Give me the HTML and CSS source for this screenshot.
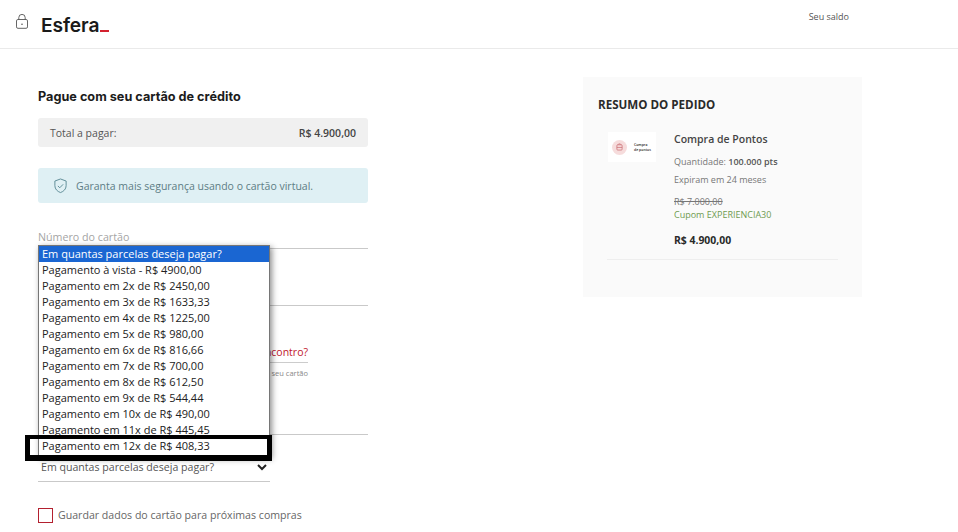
FILE: index.html
```html
<!DOCTYPE html>
<html lang="pt-BR">
<head>
<meta charset="utf-8">
<title>Esfera</title>
<link rel="stylesheet" href="styles.css">
</head>
<body>
<header class="topbar">
  <svg class="lock" viewBox="0 0 12 15" width="12" height="15" fill="none" stroke="#555" stroke-width="0.9"><rect x="0.5" y="5.5" width="11" height="8.8" rx="1.4"/><path d="M2.8 5.5V3.6a3.2 3.2 0 0 1 6.4 0v1.9"/><circle cx="6" cy="10.2" r="0.7" fill="#333" stroke="none"/></svg>
  <div class="logo">Esfera<span class="logo-dash"></span></div>
  <div class="saldo">Seu saldo</div>
</header>
<main class="page">
  <section class="form">
    <h1 class="form-title">Pague com seu cartão de crédito</h1>
    <div class="total"><span>Total a pagar:</span><strong>R$ 4.900,00</strong></div>
    <div class="notice">
      <svg viewBox="0 0 16 17" width="15" height="16" fill="none" stroke="#5b8a94" stroke-width="1"><path d="M8 1l6 2.2v5c0 3.6-2.6 6.1-6 7.3-3.4-1.2-6-3.7-6-7.3v-5z"/><path d="M5.2 8.4l2 2 3.6-3.7"/></svg>
      <span>Garanta mais segurança usando o cartão virtual.</span>
    </div>
    <div class="field field-number">Número do cartão</div>
    <div class="field field-name"></div>
    <div class="promo"><span class="promo-link">Tem cartão Encontro?</span><span class="promo-note">Use seu cartão</span></div>
    <div class="field field-cvv"></div>
    <div class="select-row"><span>Em quantas parcelas deseja pagar?</span>
      <svg viewBox="0 0 10 7" width="10" height="7" fill="none" stroke="#222" stroke-width="2"><path d="M1 1l4 4 4-4"/></svg>
    </div>
    <label class="save"><span class="box"></span>Guardar dados do cartão para próximas compras</label>

    <ul class="dropdown">
      <li class="active">Em quantas parcelas deseja pagar?</li>
      <li>Pagamento à vista - R$ 4900,00</li>
      <li>Pagamento em 2x de R$ 2450,00</li>
      <li>Pagamento em 3x de R$ 1633,33</li>
      <li>Pagamento em 4x de R$ 1225,00</li>
      <li>Pagamento em 5x de R$ 980,00</li>
      <li>Pagamento em 6x de R$ 816,66</li>
      <li>Pagamento em 7x de R$ 700,00</li>
      <li>Pagamento em 8x de R$ 612,50</li>
      <li>Pagamento em 9x de R$ 544,44</li>
      <li>Pagamento em 10x de R$ 490,00</li>
      <li>Pagamento em 11x de R$ 445,45</li>
      <li>Pagamento em 12x de R$ 408,33</li>
    </ul>
    <div class="highlight"></div>
  </section>
  <aside class="summary">
    <h2 class="summary-title">RESUMO DO PEDIDO</h2>
    <div class="item">
      <div class="thumb">
        <span class="thumb-badge"><svg viewBox="0 0 8 9" width="7" height="8" fill="none" stroke="#c9696e" stroke-width="0.8"><rect x="1" y="2" width="6" height="6" rx="1"/><path d="M2 2l1-1h2l1 1M1 5h6"/></svg></span>
        <span class="thumb-text">Compra<br>de pontos</span>
      </div>
      <div class="item-info">
        <div class="item-name">Compra de Pontos</div>
        <div class="item-qty">Quantidade: <b>100.000 pts</b></div>
        <div class="item-exp">Expiram em 24 meses</div>
        <div class="item-old">R$ 7.000,00</div>
        <div class="item-coupon">Cupom EXPERIENCIA30</div>
        <div class="item-price">R$ 4.900,00</div>
      </div>
    </div>
  </aside>
</main>
</body>
</html>
```
FILE: styles.css
```css
* { box-sizing: border-box; }
html, body { margin: 0; height: 532px; overflow: hidden; }
body { background: #fff; font-family: "Open Sans", sans-serif; color: #555; }

.topbar { height: 49px; border-bottom: 1px solid #eaeaea; display: flex; align-items: flex-start; padding: 14px 0 0 16px; position: relative; }
.lock { margin-top: 0; }
.logo { margin-left: 13px; font-family: Inter, sans-serif; font-weight: 600; font-size: 19.2px; line-height: 22px; color: #1a1a1a; display: flex; align-items: flex-end; letter-spacing: -0.1px; }
.logo-dash { width: 9px; height: 2px; background: #d3222f; margin: 0 0 4px 1px; }
.saldo { margin-left: auto; margin-right: 109px; font-size: 9px; line-height: 12px; margin-top: -3px; color: #555; }

.page { display: flex; align-items: flex-start; padding: 28px 0 0 38px; }
.form { width: 330px; position: relative; }
.form-title { margin: 12px 0 0; font-family: Inter, sans-serif; font-weight: 700; font-size: 12.7px; line-height: 16px; color: #1c1c1c; }
.total { margin-top: 13px; height: 29px; background: #f0f0f0; border-radius: 3px; display: flex; justify-content: space-between; align-items: center; padding: 0 12px; font-size: 10.5px; color: #555; }
.total strong { font-weight: 600; color: #444; }
.notice { margin-top: 21px; height: 35px; background: #dff0f4; border-radius: 3px; display: flex; align-items: center; gap: 8px; padding: 0 15px; font-size: 10.5px; color: #5d7d84; }
.field { border-bottom: 1px solid #c9c9c9; font-size: 10.7px; color: #a5a5a5; }
.field-number { margin-top: 26px; height: 20px; line-height: 16px; }
.field-name { height: 57px; }
.promo { height: 77px; width: 270px; display: flex; flex-direction: column; align-items: flex-end; padding-top: 38px; }
.promo-link { font-size: 10.5px; line-height: 16px; color: #c0162c; padding-bottom: 2px; border-bottom: 1px solid #ccc; }
.promo-note { font-size: 7.5px; line-height: 11px; margin-top: 5px; color: #888; }
.field-cvv { height: 52px; }
.select-row { width: 232px; height: 47px; border-bottom: 1px solid #c9c9c9; display: flex; justify-content: space-between; align-items: flex-end; padding: 0 3px 6px 3px; font-size: 10.6px; line-height: 15px; color: #555; }
.select-row svg { margin-bottom: 4px; }
.save { margin-top: 26px; display: flex; align-items: center; gap: 5px; font-size: 10.6px; line-height: 15px; color: #666; }
.box { width: 15px; height: 15px; border: 1px solid #b3202f; }

.dropdown { position: absolute; left: 0; top: 168px; width: 232px; height: 212px; margin: 0; padding: 0; list-style: none; background: #fff; border: 1px solid #767676; box-shadow: 2px 2px 6px rgba(0,0,0,.45); font-size: 11px; line-height: 16px; color: #222; }
.dropdown li { height: 16px; padding-left: 3px; white-space: nowrap; }
.dropdown .active { background: #1a66d2; color: #fff; }
.highlight { position: absolute; left: -13px; top: 358px; width: 247px; height: 26px; border: solid #000; border-width: 4px 5px 6px; }

.summary { margin-left: 215px; margin-top: 0; width: 279px; height: 220px; background: #fafafa; padding: 20px 15px 0; }
.summary-title { margin: 0; font-size: 11.6px; line-height: 16px; font-weight: 700; color: #2a2a2a; }
.item { margin: 18px 9px 0 9px; display: flex; padding-bottom: 12px; border-bottom: 1px solid #eee; }
.thumb { width: 48px; height: 30px; margin: 1px 0 0 1px; background: #fff; display: flex; align-items: center; gap: 7px; padding-left: 4px; flex: none; }
.thumb-badge { width: 15px; height: 15px; border-radius: 50%; background: #f6dcdc; display: flex; align-items: center; justify-content: center; flex: none; }
.thumb-text { font-size: 3.5px; line-height: 5px; color: #222; font-weight: 600; white-space: nowrap; }
.item-info { margin-left: 18px; flex: 1; }
.item-name { font-size: 10.5px; line-height: 16px; color: #444; font-weight: 600; }
.item-qty { margin-top: 9px; font-size: 9px; line-height: 12px; color: #777; }
.item-qty b { font-weight: 600; color: #555; }
.item-exp { margin-top: 6px; font-size: 9px; line-height: 12px; color: #777; }
.item-old { margin-top: 10px; font-size: 9px; line-height: 12px; color: #777; text-decoration: line-through; }
.item-coupon { font-size: 9px; line-height: 13px; color: #6e9a50; }
.item-price { margin-top: 12px; font-size: 10.4px; line-height: 14px; font-weight: 700; color: #2a2a2a; }
```
